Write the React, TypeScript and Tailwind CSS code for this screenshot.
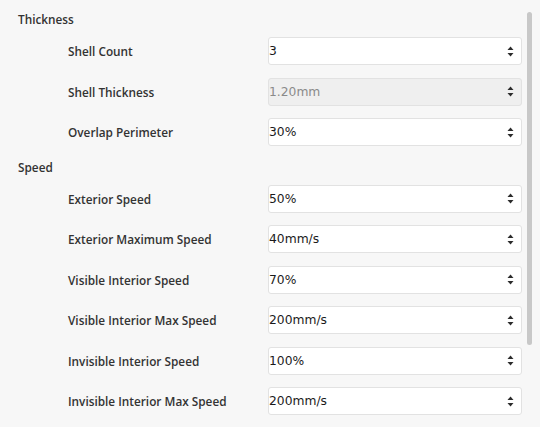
import React from 'react'

type Field = { label: string; value: string; disabled?: boolean }

const thickness: Field[] = [
  { label: 'Shell Count', value: '3' },
  { label: 'Shell Thickness', value: '1.20mm', disabled: true },
  { label: 'Overlap Perimeter', value: '30%' },
]

const speed: Field[] = [
  { label: 'Exterior Speed', value: '50%' },
  { label: 'Exterior Maximum Speed', value: '40mm/s' },
  { label: 'Visible Interior Speed', value: '70%' },
  { label: 'Visible Interior Max Speed', value: '200mm/s' },
  { label: 'Invisible Interior Speed', value: '100%' },
  { label: 'Invisible Interior Max Speed', value: '200mm/s' },
]

function Stepper() {
  return (
    <svg width="7" height="11" viewBox="0 0 7 11" className="shrink-0">
      <path d="M3.5 0.5 L6.5 4 L0.5 4 Z" fill="#2b2b2b" />
      <path d="M3.5 10.5 L6.5 7 L0.5 7 Z" fill="#2b2b2b" />
    </svg>
  )
}

function Row({ field }: { field: Field }) {
  return (
    <div className="flex h-[40.5px] items-center">
      <div className="w-[250px] pt-[2px] pl-[50px] text-[11.8px] font-semibold text-[#333]">{field.label}</div>
      <div
        className={
          field.disabled
            ? 'flex h-[28px] w-[254px] items-center justify-between rounded-[3px] border border-[#e2e2e2] bg-[#efefef] pr-[7px] text-[#8a8a8a]'
            : 'flex h-[28px] w-[254px] items-center justify-between rounded-[3px] border border-[#e2e2e2] bg-white pr-[7px] text-[#1a1a1a]'
        }
      >
        <span className="font-['DejaVu_Sans',sans-serif] text-[12.3px]">{field.value}</span>
        <Stepper />
      </div>
    </div>
  )
}

export default function App() {
  return (
    <div className="relative h-[427px] w-[540px] overflow-hidden bg-[#f7f7f7] pl-[18px] font-['Open_Sans',sans-serif]">
      <div className="h-[31px] pt-[10px] text-[11.8px] leading-[18px] font-semibold text-[#333]">Thickness</div>
      {thickness.map((f) => (
        <Row key={f.label} field={f} />
      ))}
      <div className="h-[26px] pt-[5px] text-[11.8px] leading-[18px] font-semibold text-[#333]">Speed</div>
      {speed.map((f) => (
        <Row key={f.label} field={f} />
      ))}
      <div className="absolute top-[12px] left-[527px] h-[333px] w-[5px] rounded-full bg-[#c8c8c8]" />
    </div>
  )
}
